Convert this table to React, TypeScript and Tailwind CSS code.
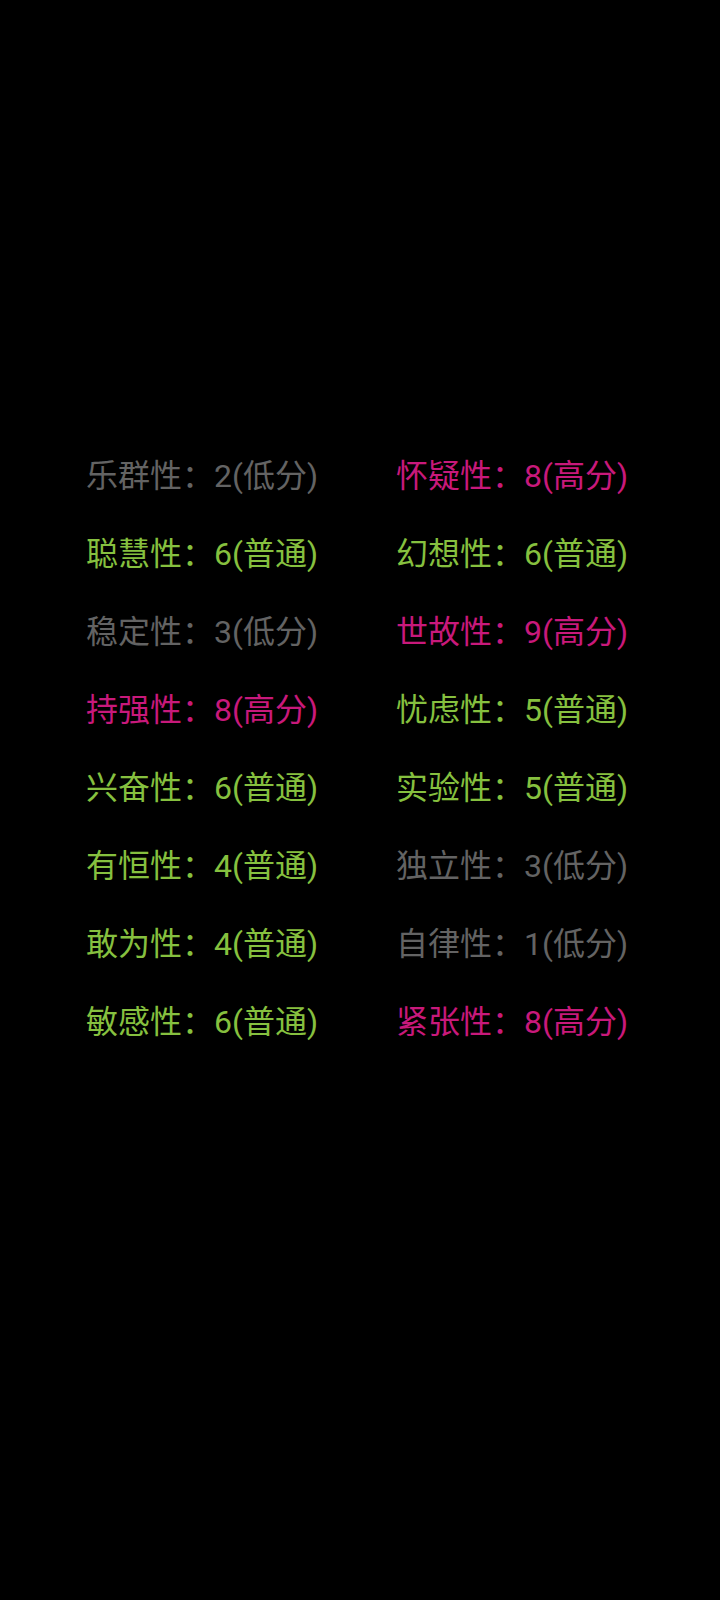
// 16PF 因子得分一览（黑底两列）

type Level = "低分" | "普通" | "高分";

interface Factor {
	name: string;
	score: number;
	level: Level;
}

// 左列・右列の因子
const leftFactors: Factor[] = [
	{ name: "乐群性", score: 2, level: "低分" },
	{ name: "聪慧性", score: 6, level: "普通" },
	{ name: "稳定性", score: 3, level: "低分" },
	{ name: "持强性", score: 8, level: "高分" },
	{ name: "兴奋性", score: 6, level: "普通" },
	{ name: "有恒性", score: 4, level: "普通" },
	{ name: "敢为性", score: 4, level: "普通" },
	{ name: "敏感性", score: 6, level: "普通" },
];

const rightFactors: Factor[] = [
	{ name: "怀疑性", score: 8, level: "高分" },
	{ name: "幻想性", score: 6, level: "普通" },
	{ name: "世故性", score: 9, level: "高分" },
	{ name: "忧虑性", score: 5, level: "普通" },
	{ name: "实验性", score: 5, level: "普通" },
	{ name: "独立性", score: 3, level: "低分" },
	{ name: "自律性", score: 1, level: "低分" },
	{ name: "紧张性", score: 8, level: "高分" },
];

const levelColor: Record<Level, string> = {
	低分: "text-[#636363]",
	普通: "text-[#86c03f]",
	高分: "text-[#c8197b]",
};

function FactorRow({ factor }: { factor: Factor }) {
	return (
		<div className={`h-[78px] leading-[78px] whitespace-nowrap ${levelColor[factor.level]}`}>
			{factor.name}：{factor.score}({factor.level})
		</div>
	);
}

export default function App() {
	return (
		<main
			className="min-h-[1600px] w-[720px] bg-black pt-[437px] pl-[86px] text-[32px]"
			style={{ fontFamily: 'Roboto, "Noto Sans CJK SC", sans-serif' }}
		>
			<div className="grid grid-cols-[310px_310px]">
				<div className="flex flex-col">
					{leftFactors.map((f) => (
						<FactorRow key={f.name} factor={f} />
					))}
				</div>
				<div className="flex flex-col">
					{rightFactors.map((f) => (
						<FactorRow key={f.name} factor={f} />
					))}
				</div>
			</div>
		</main>
	);
}
